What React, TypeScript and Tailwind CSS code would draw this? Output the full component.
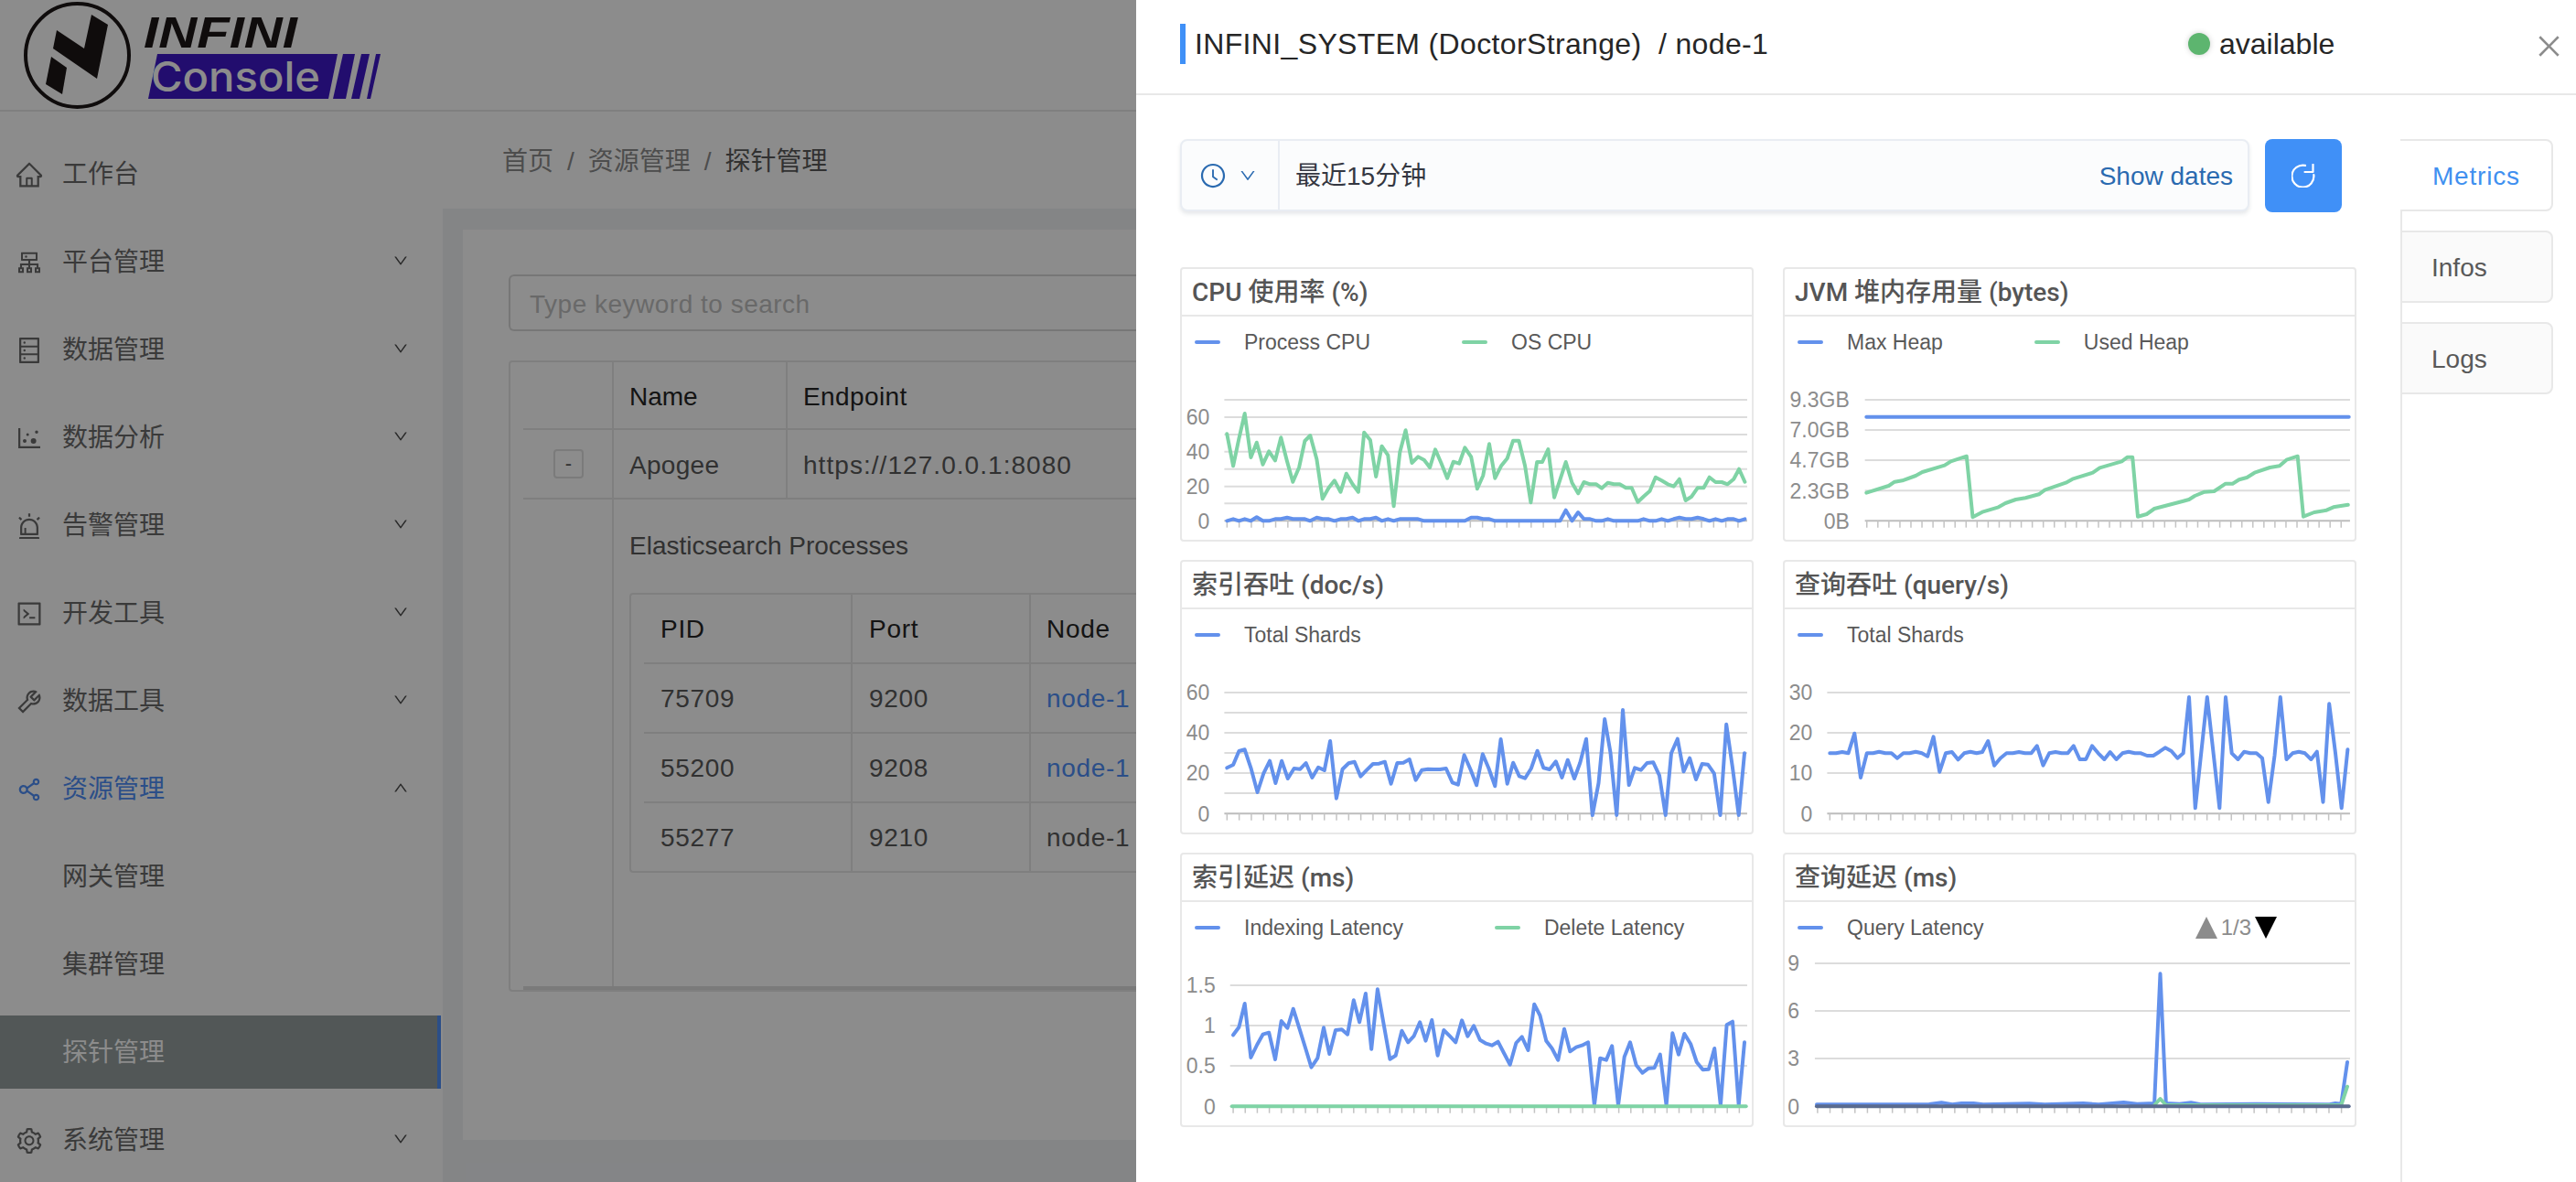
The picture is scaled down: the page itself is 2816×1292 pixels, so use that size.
import React from "react";
import {
  AiOutlineHome, AiOutlineCluster, AiOutlineDatabase, AiOutlineDotChart, AiOutlineAlert,
  AiOutlineCode, AiOutlineTool, AiOutlineShareAlt, AiOutlineSetting, AiOutlineClockCircle,
  AiOutlineClose, AiOutlineDown, AiOutlineUp,
} from "react-icons/ai";

const BLUE = "#6391ec";
const GREEN = "#7fd3a5";

type Series = { color: string; pts: number[]; width?: number };
type ChartDef = {
  title: string;
  legend: { name: string; color: string }[];
  off: number;
  grid: number[];
  labels: [string, number][];
  labelRight: number;
  plot: [number, number];
  tick: [number, number];
  series: Series[];
  pager?: boolean;
};

const cpuOs = [147,585,163,690,178,600,193,518,209,662,224,613,240,685,256,642,272,672,287,597,303,675,318,742,334,695,349,608,363,590,380,668,395,798,411,762,426,738,442,775,457,715,473,750,488,775,503,580,519,605,534,725,549,625,565,655,580,822,596,645,611,573,627,680,643,660,659,670,674,695,688,636,703,680,719,730,735,676,750,682,765,630,781,660,797,765,812,722,828,618,843,730,859,690,875,665,890,607,905,607,921,690,936,810,952,677,966,677,981,635,997,793,1012,735,1027,677,1043,745,1059,780,1074,743,1090,750,1106,750,1120,763,1136,745,1152,750,1167,750,1183,762,1198,762,1214,808,1229,790,1245,772,1260,727,1276,738,1292,750,1307,757,1322,733,1338,803,1354,790,1369,762,1385,762,1400,727,1416,743,1432,743,1447,750,1463,733,1477,700,1492,742];
const cpuProc = [147,870,163,864,178,870,193,864,209,870,224,858,240,870,256,870,272,864,287,864,303,859,318,864,334,864,349,864,363,870,380,859,395,864,411,864,426,870,442,864,457,864,473,859,488,870,503,864,519,864,534,859,549,870,565,864,580,870,596,864,611,864,627,864,643,864,659,870,765,870,781,859,797,859,812,864,828,864,843,870,1012,870,1027,835,1043,870,1059,842,1074,864,1090,864,1106,870,1120,870,1136,864,1152,870,1214,870,1229,864,1245,870,1260,870,1276,864,1292,870,1307,864,1322,859,1338,864,1354,864,1369,859,1385,864,1400,870,1416,864,1432,870,1447,864,1463,864,1477,870,1492,864];
const heapUsed = [237,778,295,755,310,742,330,738,365,722,382,710,440,688,456,675,497,658,513,858,540,840,580,825,598,812,625,800,650,795,685,783,700,769,755,745,772,733,825,712,843,696,900,675,915,661,928,661,942,856,965,848,985,830,1060,805,1075,800,1090,788,1115,775,1140,773,1170,748,1188,748,1205,735,1225,728,1245,712,1285,695,1310,690,1328,670,1357,658,1372,856,1400,842,1432,835,1450,825,1488,817];
const indexTp = [147,720,163,710,178,665,193,660,209,720,226,800,242,738,258,697,273,770,289,697,305,755,321,722,337,724,352,704,368,752,384,718,400,728,415,632,431,820,447,724,463,705,478,700,494,748,510,727,526,707,542,706,557,700,573,772,589,704,605,703,621,692,637,760,653,727,669,724,684,725,700,725,716,722,732,768,747,775,763,678,780,727,795,777,811,675,827,722,843,780,858,626,875,772,890,703,906,747,921,754,937,722,953,664,969,720,985,725,1001,699,1017,752,1032,694,1049,755,1064,703,1080,625,1096,875,1112,770,1128,560,1143,670,1159,875,1175,530,1191,776,1206,720,1222,727,1238,704,1254,702,1270,745,1286,875,1301,672,1317,625,1333,732,1349,688,1365,758,1381,707,1396,709,1412,738,1428,875,1444,577,1460,720,1476,875,1491,672];
const queryTp = [142,672,158,672,174,668,190,672,206,607,222,752,238,672,254,672,270,667,286,672,302,672,317,688,333,672,349,672,365,667,381,672,396,682,411,618,427,733,443,672,459,668,475,693,491,672,507,667,523,672,538,668,553,632,569,712,585,688,601,672,617,672,633,668,649,672,665,672,680,648,696,712,712,672,728,668,744,672,760,672,775,648,791,692,807,692,823,648,839,672,855,692,870,668,886,692,902,672,918,667,934,672,950,672,966,680,982,680,998,667,1013,654,1029,665,1045,688,1060,672,1075,488,1091,852,1122,488,1154,852,1170,488,1186,672,1202,692,1218,667,1234,672,1250,672,1265,688,1281,832,1297,680,1312,488,1328,692,1344,672,1360,667,1376,672,1392,692,1407,667,1423,832,1439,510,1455,672,1471,852,1487,660];
const indexLat = [163,636,178,610,193,533,209,710,225,668,240,634,256,628,272,716,288,590,304,613,319,550,335,615,351,680,366,742,382,712,398,612,413,698,429,620,445,618,460,634,476,522,491,594,507,500,522,682,538,486,554,600,570,715,585,703,601,622,617,660,632,640,648,594,663,655,679,587,694,703,710,620,726,640,741,660,757,588,772,640,788,606,804,652,820,664,835,670,851,658,866,695,882,733,898,662,913,642,929,686,945,535,960,572,976,655,991,680,1007,718,1023,616,1038,690,1054,676,1069,670,1085,660,1101,866,1116,712,1132,718,1147,672,1163,866,1179,708,1194,660,1210,735,1226,760,1242,745,1257,744,1272,700,1288,866,1304,630,1320,700,1335,632,1351,665,1367,725,1383,750,1398,748,1413,680,1429,866,1445,603,1460,592,1476,866,1491,660];
const queryLat = [108,864,400,863,432,858,460,864,484,860,515,860,540,864,660,861,700,864,800,860,840,864,905,857,940,862,985,860,1000,435,1015,860,1050,862,1080,858,1105,864,1250,862,1440,864,1455,860,1470,862,1486,725];

const charts: ChartDef[] = [
  {
    title: "CPU 使用率 (%)",
    legend: [{ name: "Process CPU", color: BLUE }, { name: "OS CPU", color: GREEN }],
    off: 25, grid: [473, 530, 587, 643, 700, 757, 813, 870],
    labels: [["60", 530], ["40", 643], ["20", 757], ["0", 870]], labelRight: 102,
    plot: [140, 1498], tick: [147, 31.6],
    series: [{ color: GREEN, pts: cpuOs }, { color: BLUE, pts: cpuProc }],
  },
  {
    title: "JVM 堆内存用量 (bytes)",
    legend: [{ name: "Max Heap", color: BLUE }, { name: "Used Heap", color: GREEN }],
    off: 20, grid: [473, 572, 671, 771, 870],
    labels: [["9.3GB", 473], ["7.0GB", 572], ["4.7GB", 671], ["2.3GB", 771], ["0B", 870]], labelRight: 193,
    plot: [233, 1493], tick: [238, 28.65],
    series: [{ color: BLUE, pts: [237, 529, 1490, 529] }, { color: GREEN, pts: heapUsed }],
  },
  {
    title: "索引吞吐 (doc/s)",
    legend: [{ name: "Total Shards", color: BLUE }],
    off: 25, grid: [473, 539, 605, 671, 737, 803, 870],
    labels: [["60", 473], ["40", 605], ["20", 737], ["0", 870]], labelRight: 102,
    plot: [140, 1498], tick: [147, 31.6],
    series: [{ color: BLUE, pts: indexTp }],
  },
  {
    title: "查询吞吐 (query/s)",
    legend: [{ name: "Total Shards", color: BLUE }],
    off: 20, grid: [473, 605, 737, 870],
    labels: [["30", 473], ["20", 605], ["10", 737], ["0", 870]], labelRight: 97,
    plot: [135, 1493], tick: [142, 31.6],
    series: [{ color: BLUE, pts: queryTp }],
  },
  {
    title: "索引延迟 (ms)",
    legend: [{ name: "Indexing Latency", color: BLUE }, { name: "Delete Latency", color: GREEN }],
    off: 25, grid: [473, 605, 737, 870],
    labels: [["1.5", 473], ["1", 605], ["0.5", 737], ["0", 870]], labelRight: 117,
    plot: [155, 1498], tick: [163, 31.3],
    series: [{ color: BLUE, pts: indexLat }, { color: GREEN, pts: [160, 870, 1495, 870] }],
  },
  {
    title: "查询延迟 (ms)",
    legend: [{ name: "Query Latency", color: BLUE }],
    off: 20, grid: [401, 557, 713, 870],
    labels: [["9", 401], ["6", 557], ["3", 713], ["0", 870]], labelRight: 63,
    plot: [103, 1493], tick: [110, 32.4],
    pager: true,
    series: [
      { color: BLUE, pts: queryLat },
      { color: GREEN, pts: [985, 866, 1000, 845, 1015, 866, 1470, 866, 1486, 805] },
      { color: "#5a6b8f", pts: [108, 870, 1490, 870] },
    ],
  },
];

function Chart({ c }: { c: ChartDef }) {
  const X = (z: number) => (z - c.off) / 2.376 - 2;
  const Y = (z: number) => z / 3 - 122.67;
  const ticks: number[] = [];
  for (let t = c.tick[0]; t < c.plot[1] - 10; t += c.tick[1]) ticks.push(t);
  return (
    <div className="h-[300px] rounded-[4px] border-2 border-[#e8e8e8] bg-white">
      <div className="flex h-[52px] items-center border-b-2 border-[#e8e8e8] pl-[11px] pt-[2px] text-[28px] font-medium text-[#555] [font-family:Roboto,'Noto_Sans_CJK_SC',sans-serif]">
        {c.title}
      </div>
      <div className="flex h-[56px] items-center whitespace-nowrap pl-[14px] text-[23px] text-[#595959]">
        {c.legend.map((l) => (
          <div key={l.name} className="mr-[100px] flex shrink-0 items-center">
            <span className="mr-[26px] h-[4px] w-[28px] shrink-0 rounded-full" style={{ backgroundColor: l.color }} />
            <span>{l.name}</span>
          </div>
        ))}
        {c.pager && (
          <div className="ml-auto mr-[85px] flex items-center gap-[4px] text-[#8c8c8c]">
            <svg width="24" height="24" viewBox="0 0 24 24"><path d="M12 0L24 24H0Z" fill="#8c8c8c" /></svg>
            <span className="text-[24px]">1/3</span>
            <svg width="24" height="24" viewBox="0 0 24 24"><path d="M0 0H24L12 24Z" fill="#000" /></svg>
          </div>
        )}
      </div>
      <svg width="623" height="188" viewBox="0 0 623 188" className="block">
        {c.grid.map((g, i) => (
          <line key={g} x1={X(c.plot[0])} x2={X(c.plot[1])} y1={Y(g)} y2={Y(g)} stroke={i === c.grid.length - 1 ? "#bdbdbd" : "#dcdcdc"} strokeWidth="2" />
        ))}
        {ticks.map((t) => (
          <line key={t} x1={X(t)} x2={X(t)} y1={Y(870)} y2={Y(892)} stroke="#c4c4c4" strokeWidth="1.5" />
        ))}
        {c.labels.map(([t, y]) => (
          <text key={t} x={X(c.labelRight)} y={Y(y)} dy="0.36em" textAnchor="end" fontSize="23" fill="#8c8c8c">{t}</text>
        ))}
        {c.series.map((s, i) => {
          const p: string[] = [];
          for (let k = 0; k < s.pts.length; k += 2) p.push(`${X(s.pts[k]).toFixed(1)},${Y(s.pts[k + 1]).toFixed(1)}`);
          return <polyline key={i} points={p.join(" ")} fill="none" stroke={s.color} strokeWidth="4" strokeLinejoin="round" strokeLinecap="round" />;
        })}
      </svg>
    </div>
  );
}

function Logo() {
  return (
    <svg width="430" height="122" viewBox="0 0 430 122" className="block">
      <circle cx="84.5" cy="60.5" r="56.5" fill="none" stroke="#1c1616" strokeWidth="4" />
      <path d="M100 16L118 27L106 86L58 53L62 33L92 53Z" fill="#1c1616" />
      <path d="M56 62L73 74L68 103L50 92Z" fill="#1c1616" />
      <text x="157" y="52" fontSize="49" fontWeight="700" fontStyle="italic" textLength="168" lengthAdjust="spacingAndGlyphs" fill="#1c1616" style={{ fontFamily: "'Liberation Sans', sans-serif" }}>INFINI</text>
      <path d="M172 59H369L359 108H162Z" fill="#3e18c8" />
      <path d="M375 59H388L378 108H364Z" fill="#3e18c8" />
      <path d="M395 59H404L393 108H384Z" fill="#3e18c8" />
      <path d="M411 59H416L405 108H401Z" fill="#3e18c8" />
      <text x="165" y="100" fontSize="45" fontWeight="500" textLength="185" lengthAdjust="spacingAndGlyphs" fill="#fff" style={{ fontFamily: "Inter, sans-serif" }}>Console</text>
    </svg>
  );
}

const nav = [
  { t: "工作台", I: AiOutlineHome },
  { t: "平台管理", I: AiOutlineCluster, c: 1 },
  { t: "数据管理", I: AiOutlineDatabase, c: 1 },
  { t: "数据分析", I: AiOutlineDotChart, c: 1 },
  { t: "告警管理", I: AiOutlineAlert, c: 1 },
  { t: "开发工具", I: AiOutlineCode, c: 1 },
  { t: "数据工具", I: AiOutlineTool, c: 1 },
  { t: "资源管理", I: AiOutlineShareAlt, open: 1 },
  { t: "网关管理" },
  { t: "集群管理" },
  { t: "探针管理", sel: 1 },
  { t: "系统管理", I: AiOutlineSetting, c: 1 },
];

function Sidebar() {
  return (
    <aside className="w-[484px] shrink-0 bg-white">
      <div className="h-[122px] border-b-2 border-[#e8e8e8]"><Logo /></div>
      <nav className="pt-[28px]">
        {nav.map((n) => (
          <div
            key={n.t}
            className={
              "relative mb-[16px] flex h-[80px] items-center pt-[2px] text-[28px] " +
              (n.sel ? "mr-[2px] border-r-[4px] border-[#4f8ff7] bg-[#959e9e] text-white " : "") +
              (n.open ? "text-[#4f8ff7] " : n.sel ? "" : "text-[#6b6b6b] ")
            }
          >
            <span className="flex w-[68px] shrink-0 justify-center pr-[4px]">
              {n.I && <n.I size={32} />}
            </span>
            <span>{n.t}</span>
            {n.c && <AiOutlineDown size={18} className="ml-auto mr-[37px] -translate-y-[2px] text-[#4a4a4a]" />}
            {n.open && <AiOutlineUp size={18} className="ml-auto mr-[37px] -translate-y-[2px] text-[#4a4a4a]" />}
          </div>
        ))}
      </nav>
    </aside>
  );
}

function ProbeTable() {
  return (
    <div className="h-[690px] w-[2000px] rounded-[4px] border-2 border-r-0 border-[#e8e8e8] text-[28px] text-[#595959]">
      <div className="ml-[14px] flex h-[74px] items-center border-b-2 border-[#e8e8e8] text-[#262626]">
        <div className="h-full w-[99px] border-r-2 border-[#e8e8e8]" />
        <div className="flex h-full w-[190px] items-center border-r-2 border-[#e8e8e8] pl-[17px] pt-[3px]">Name</div>
        <div className="pl-[17px] pt-[3px] tracking-[0.4px]">Endpoint</div>
      </div>
      <div className="ml-[14px] flex h-[76px] items-center border-b-2 border-[#e8e8e8]">
        <div className="flex h-full w-[99px] items-center justify-center border-r-2 border-[#e8e8e8] pl-[2px]">
          <span className="flex h-[32px] w-[33px] items-center justify-center rounded-[4px] border-2 border-[#e0e0e0] bg-white text-[22px] leading-none">-</span>
        </div>
        <div className="flex h-full w-[190px] items-center border-r-2 border-[#e8e8e8] pl-[17px] pt-[3px] tracking-[0.3px]">Apogee</div>
        <div className="pl-[17px] pt-[3px] tracking-[1.05px]">https://127.0.0.1:8080</div>
      </div>
      <div className="ml-[14px] flex h-[536px] border-b-[4px] border-[#dedede]">
        <div className="h-full w-[99px] shrink-0 border-r-2 border-[#e8e8e8]" />
        <div className="flex-1 pl-[17px]">
          <div className="flex h-[102px] items-center">Elasticsearch Processes</div>
          <div className="w-[1200px] rounded-[4px] border-2 border-r-0 border-[#e8e8e8] tracking-[0.7px]">
            {[
              ["PID", "Port", "Node"],
              ["75709", "9200", "node-1"],
              ["55200", "9208", "node-1"],
              ["55277", "9210", "node-1"],
            ].map((r, i) => (
              <div key={r[0]} className={"ml-[14px] flex items-center " + (i < 3 ? "border-b-2 border-[#e8e8e8] " : "") + (i === 3 ? "h-[74px] " : "h-[76px] ") + (i === 0 ? "text-[#262626] " : "")}>
                <div className="flex h-full w-[228px] items-center border-r-2 border-[#e8e8e8] pl-[18px] pt-[2px]">{r[0]}</div>
                <div className="flex h-full w-[195px] items-center border-r-2 border-[#e8e8e8] pl-[18px] pt-[2px]">{r[1]}</div>
                <div className={"pl-[17px] pt-[2px] " + (i === 1 || i === 2 ? "text-[#4f8ff7]" : "")}>{r[2]}</div>
              </div>
            ))}
          </div>
        </div>
      </div>
    </div>
  );
}

function Main() {
  return (
    <main className="flex min-w-0 flex-1 flex-col overflow-hidden">
      <div className="h-[122px] shrink-0 border-b-2 border-[#e8e8e8] bg-white" />
      <div className="flex h-[106px] shrink-0 items-center gap-[15px] bg-white pl-[65px] pt-[3px] text-[28px] text-[#8c8c8c]">
        <span>首页</span><span>/</span><span>资源管理</span><span>/</span><span className="text-[#595959]">探针管理</span>
      </div>
      <div className="flex-1 bg-[#f0f2f5] pl-[22px] pt-[23px]">
        <div className="h-[995px] w-[2300px] bg-white pl-[50px] pt-[49px]">
          <div className="flex h-[62px] w-[2000px] items-center rounded-[6px] border-2 border-r-0 border-[#d9d9d9] pl-[21px] pt-[3px] text-[28px] tracking-[0.5px] text-[#bfbfbf]">
            Type keyword to search
          </div>
          <div className="mt-[32px]"><ProbeTable /></div>
        </div>
      </div>
    </main>
  );
}

function Drawer() {
  return (
    <div className="absolute bottom-0 right-0 top-0 flex w-[1574px] flex-col bg-white">
      <div className="flex h-[104px] shrink-0 items-center border-b-2 border-[#e8e8e8] pb-[6px] pl-[48px]">
        <span className="mr-[10px] h-[44px] w-[6px] shrink-0 bg-[#4090f7]" />
        <span className="w-[1086px] shrink-0 whitespace-pre text-[32px] tracking-[0.35px] text-[#262626]">INFINI_SYSTEM (DoctorStrange)  / node-1</span>
        <span className="h-[24px] w-[24px] shrink-0 rounded-full bg-[#5db56f] shadow-[0_0_6px_#cfcfcf]" />
        <span className="ml-[10px] w-[344px] shrink-0 text-[32px] text-[#262626]">available</span>
        <AiOutlineClose size={33} className="shrink-0 translate-y-[2px] text-[#8c8c8c]" />
      </div>
      <div className="flex flex-1">
        <div className="w-[1382px] shrink-0 pl-[48px] pt-[48px]">
          <div className="flex items-start gap-[17px]">
            <div className="flex h-[79px] w-[1169px] items-center rounded-[8px] border-2 border-[#e9edf3] bg-[#fbfcfd] text-[28px] shadow-[0_3px_4px_rgba(60,70,90,0.12)]">
              <div className="flex h-full w-[107px] items-center gap-[13px] border-r-2 border-[#e9edf3] pl-[19px] text-[#2a6ab0]">
                <AiOutlineClockCircle size={30} />
                <AiOutlineDown size={20} />
              </div>
              <span className="pl-[17px] pt-[2px] text-[#343741]">最近15分钟</span>
              <span className="ml-auto pr-[16px] pt-[2px] text-[#2a6ab0]">Show dates</span>
            </div>
            <div className="flex h-[80px] w-[84px] items-center justify-center rounded-[8px] bg-[#4090f7] text-white">
              <svg width="26" height="26" viewBox="0 0 26 26" fill="none" stroke="currentColor" strokeWidth="2.2" strokeLinecap="round" strokeLinejoin="round">
                <path d="M15 1.9A12 12 0 1 0 24.3 12" />
                <path d="M23.5 0.8V9H14.5" />
              </svg>
            </div>
          </div>
          <div className="mt-[60px] grid w-[1286px] grid-cols-2 gap-x-[32px] gap-y-[20px]">
            {charts.map((c) => <Chart key={c.title} c={c} />)}
          </div>
        </div>
        <div className="mt-[48px] flex-1 border-l-2 border-[#e8e8e8] text-[28px]">
          <div className="-ml-[2px] flex h-[79px] w-[167px] items-center rounded-r-[8px] border-2 border-l-0 border-[#e8e8e8] bg-white pl-[35px] pt-[2px] tracking-[0.8px] text-[#4090f0]">Metrics</div>
          <div className="-ml-[2px] mt-[21px] flex h-[79px] w-[167px] items-center rounded-r-[8px] border-2 border-[#e8e8e8] bg-[#fafafa] pl-[32px] pt-[2px] text-[#595959]">Infos</div>
          <div className="-ml-[2px] mt-[21px] flex h-[79px] w-[167px] items-center rounded-r-[8px] border-2 border-[#e8e8e8] bg-[#fafafa] pl-[32px] pt-[2px] text-[#595959]">Logs</div>
        </div>
      </div>
    </div>
  );
}

export default function App() {
  return (
    <div className="relative flex h-[1292px] w-[2816px] overflow-hidden bg-white [font-family:'Liberation_Sans','Noto_Sans_CJK_SC',sans-serif]">
      <Sidebar />
      <Main />
      <div className="absolute inset-0 bg-[rgba(0,0,0,0.45)]" />
      <Drawer />
    </div>
  );
}
